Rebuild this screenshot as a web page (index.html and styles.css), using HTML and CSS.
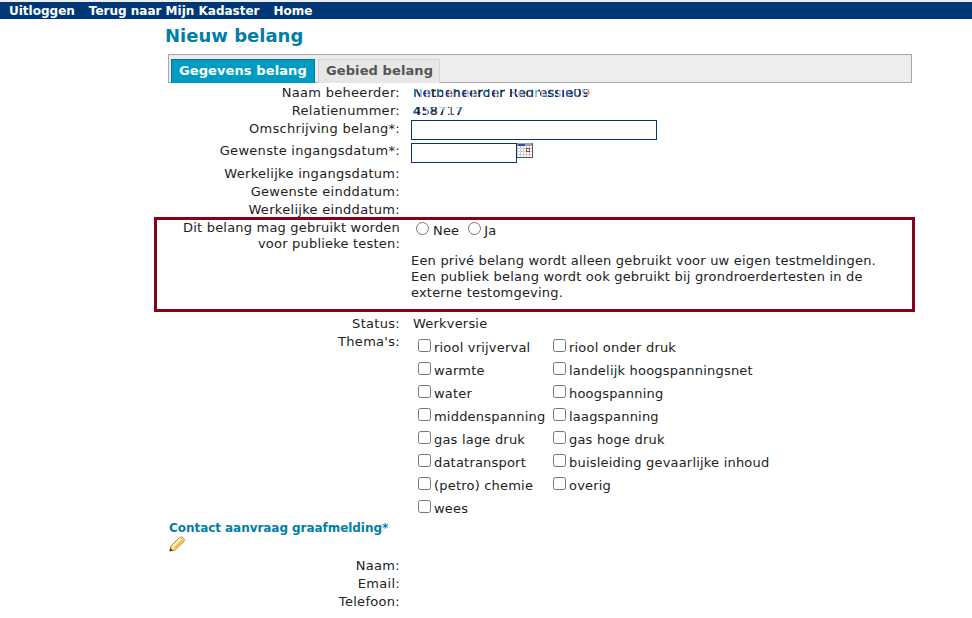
FILE: index.html
```html
<!DOCTYPE html>
<html lang="nl">
<head>
<meta charset="utf-8">
<title>Nieuw belang</title>
<link rel="stylesheet" href="styles.css">
</head>
<body>
<nav class="topbar"><a>Uitloggen</a><a>Terug naar Mijn Kadaster</a><a>Home</a></nav>
<main>
<h1>Nieuw belang</h1>
<div class="tabs"><a class="tab active">Gegevens belang</a><a class="tab">Gebied belang</a></div>
<div class="form">
<div class="row"><label>Naam beheerder:</label><div class="value"><span class="masked">Netbeheerder Regressie09</span></div></div>
<div class="row"><label>Relatienummer:</label><div class="value"><span class="masked">458717</span></div></div>
<div class="row tall"><label>Omschrijving belang*:</label><div class="field"><input type="text" class="wide"></div></div>
<div class="row date"><label>Gewenste ingangsdatum*:</label><div class="field"><input type="text" class="short"><svg class="calendar" width="16" height="15" viewBox="0 0 16 15" shape-rendering="crispEdges"><path fill="#fff" d="M0 0h16v15H0z"/><path fill="#a4a4a4" d="M0 0h16v3H0z"/><path fill="#4444b0" d="M1 1h7v2H1z"/><path stroke="#ccc" d="M.5 3v12M3.500 3v12M6.500 3v12M9.500 3v12M12.500 3v12M0 5.500h16M0 8.500h16M0 11.500h16"/><path fill="#fff" stroke="#a93b43" d="M9.500 5.500h3v3h-3z"/><path fill="none" stroke="#555" d="M15.500 0v14.500H0"/></svg></div></div>
<div class="row"><label>Werkelijke ingangsdatum:</label></div>
<div class="row"><label>Gewenste einddatum:</label></div>
<div class="row last"><label>Werkelijke einddatum:</label></div>
</div>
<section class="highlight">
<label>Dit belang mag gebruikt worden<br>voor publieke testen:</label>
<div class="choice">
<div class="radios"><i class="radio"></i><span>Nee</span><i class="radio"></i><span>Ja</span></div>
<p>Een privé belang wordt alleen gebruikt voor uw eigen testmeldingen.<br>Een publiek belang wordt ook gebruikt bij grondroerdertesten in de<br>externe testomgeving.</p>
</div>
</section>
<div class="form lower">
<div class="row"><label>Status:</label><div class="value">Werkversie</div></div>
<div class="row themes-row"><label>Thema's:</label>
<div class="themes">
<span><i></i>riool vrijverval</span><span><i></i>riool onder druk</span>
<span><i></i>warmte</span><span><i></i>landelijk hoogspanningsnet</span>
<span><i></i>water</span><span><i></i>hoogspanning</span>
<span><i></i>middenspanning</span><span><i></i>laagspanning</span>
<span><i></i>gas lage druk</span><span><i></i>gas hoge druk</span>
<span><i></i>datatransport</span><span><i></i>buisleiding gevaarlijke inhoud</span>
<span><i></i>(petro) chemie</span><span><i></i>overig</span>
<span><i></i>wees</span>
</div></div>
</div>
<h2>Contact aanvraag graafmelding*</h2>
<svg class="pencil" width="16" height="16" viewBox="0 0 16 16"><path fill="#fbe28a" stroke="#b9752f" stroke-width=".9" d="M.8 15 2 9.900 10.600 1.500Q12.500.3 14 1.600 16 3.200 14.900 5.500L6.100 14z"/><path stroke="#fff6bd" stroke-width="2" d="m4 10.500 7.500-7.300"/><path stroke="#f0b72f" stroke-width="1.700" d="m5.500 12 7.600-7.400"/><path fill="#eec5a0" d="m11.500 2 1.500-.6 1.700 1.800-.5 1.300z"/><path fill="#49311c" d="m.6 15.200.8-3.300 2.500 2.500z"/></svg>
<div class="form contact">
<div class="row"><label>Naam:</label></div>
<div class="row"><label>Email:</label></div>
<div class="row"><label>Telefoon:</label></div>
</div>
</main>
</body>
</html>
```
FILE: styles.css
```css
* { box-sizing: border-box; }
body { margin: 0; width: 972px; height: 618px; overflow: hidden; background: #fff; color: #222; font: 13px/16px Verdana, "DejaVu Sans", sans-serif; letter-spacing: .2px; white-space: nowrap; }
.topbar { height: 19px; padding-left: 9px; border-top: 2px solid #eee; background: #003877; color: #fff; font-size: 12px; font-weight: bold; line-height: 18px; display: flex; letter-spacing: 0; }
.topbar a { margin-right: 14px; }
main { height: 599px; }
h1 { margin: 0; padding: 4px 0 0 165px; height: 35px; color: #007ea8; font-size: 18px; line-height: 25px; letter-spacing: 0; }
.tabs { width: 744px; height: 29px; margin-left: 168px; padding: 4px 0 0 2px; display: flex; gap: 3px; background: #ededed; border: 1px solid #a8a8a8; }
.tab { height: 24px; width: 122px; padding: 0 7px; border: 1px solid #d3d3d3; border-bottom: 0; background: #e7e7e7; color: #555; font-weight: bold; line-height: 22px; letter-spacing: .1px; }
.tab.active { width: 144px; border-color: #007b9e; background: #009bc3; color: #fff; }
.form { padding: 1px 0 0 168px; }
.row { display: flex; height: 18px; line-height: 18px; }
label { width: 232px; flex: none; text-align: right; }
.form label { letter-spacing: .3px; }
.value { padding-left: 13px; }
.field { display: flex; align-items: flex-start; padding-left: 11px; }
.tall { height: 22px; }
.date { height: 23px; }
.last { height: 16px; }
input { display: block; border: 1px solid #003877; margin: 0; padding: 0; height: 20px; background: #fff; }
.wide { width: 246px; }
.short { width: 106px; margin-top: 1px; }
.calendar { margin-top: 1px; }
.masked {
  display: block;
  height: 18px;
  line-height: 18px;
  letter-spacing: .15px;
  color: transparent;
  -webkit-text-stroke: .6px transparent;
  background: repeating-linear-gradient(90deg, #1d5eac 0 4px, #202033 4px 7px, #6abaf5 7px 10px, #202080 10px 13px, #e0a060 13px 15px, #1d5eac 15px 19px, #222 19px 23px);
  background-clip: text;
  -webkit-background-clip: text;
  clip-path: inset(5px 0 5px 0);
}
.highlight { width: 761px; height: 95px; margin-left: 154px; border: 3px solid #850019; display: flex; }
.highlight label { width: 243px; }
.choice { padding-left: 11px; }
.radios { display: flex; height: 18px; line-height: 21px; }
.radio { width: 13px; height: 13px; border: 1px solid #767676; border-radius: 50%; margin: 2px 4px 0 5px; }
.radios span + .radio { margin: 2px 3px 0 9px; }
.choice p { margin: 15px 0 0; }
.lower { padding-top: 3px; }
.themes-row { height: 187px; }
.themes { display: grid; grid-template-columns: 135px auto; grid-auto-rows: 23px; padding: 5px 0 0 18px; line-height: 20px; height: 189px; }
.themes span { display: flex; }
.themes i { width: 13px; height: 13px; flex: none; margin: 1px 3px 0 0; border: 1px solid #767676; border-radius: 2.500px; }
h2 { margin: 0; padding-left: 169px; font-size: 12px; line-height: 16px; color: #007ea8; letter-spacing: -.05px; }
.pencil { display: block; margin-left: 169px; }
.contact { padding-top: 5px; }
```
